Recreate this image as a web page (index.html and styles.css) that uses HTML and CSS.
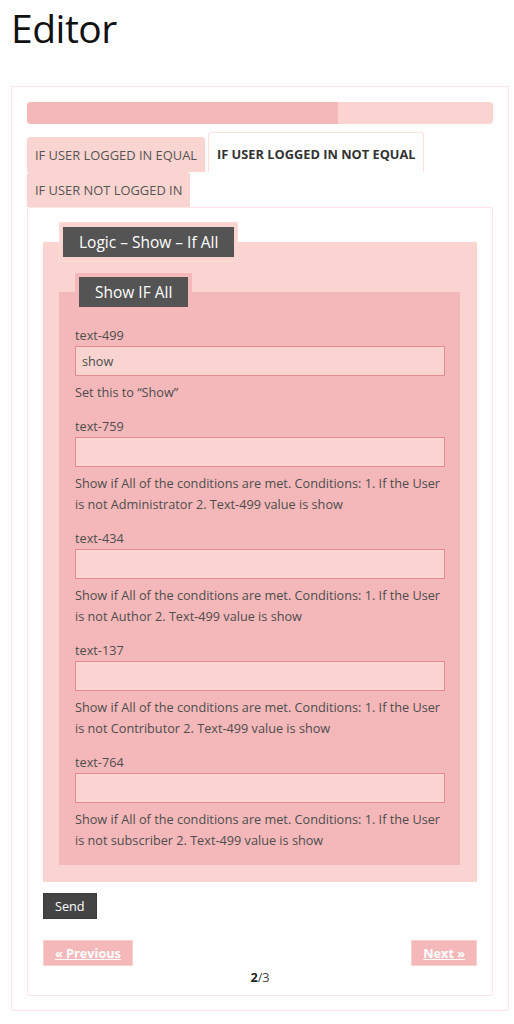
FILE: index.html
```html
<!DOCTYPE html>
<html>
<head>
<meta charset="utf-8">
<link rel="stylesheet" href="styles.css">
</head>
<body>
<h1 class="title">Editor</h1>
<div class="outer">
  <div class="progress"><div class="progress-fill" style="width:66.7%"></div></div>
  <div class="tabs">
    <div class="tab">IF USER LOGGED IN EQUAL</div>
    <div class="tab tab-active">IF USER LOGGED IN NOT EQUAL</div>
    <div class="tab">IF USER NOT LOGGED IN</div>
  </div>
  <div class="panel">
    <fieldset class="fs fs-outer">
      <legend class="lg lg-outer"><span class="lg-text">Logic – Show – If All</span></legend>
      <fieldset class="fs fs-inner">
        <legend class="lg lg-inner"><span class="lg-text">Show IF All</span></legend>
        <div class="field">
          <label class="label">text-499</label>
          <div class="input">show</div>
          <p class="desc">Set this to “Show”</p>
        </div>
        <div class="field">
          <label class="label">text-759</label>
          <div class="input"></div>
          <p class="desc">Show if All of the conditions are met. Conditions: 1. If the User is not Administrator 2. Text-499 value is show</p>
        </div>
        <div class="field">
          <label class="label">text-434</label>
          <div class="input"></div>
          <p class="desc">Show if All of the conditions are met. Conditions: 1. If the User is not Author 2. Text-499 value is show</p>
        </div>
        <div class="field">
          <label class="label">text-137</label>
          <div class="input"></div>
          <p class="desc">Show if All of the conditions are met. Conditions: 1. If the User is not Contributor 2. Text-499 value is show</p>
        </div>
        <div class="field">
          <label class="label">text-764</label>
          <div class="input"></div>
          <p class="desc">Show if All of the conditions are met. Conditions: 1. If the User is not subscriber 2. Text-499 value is show</p>
        </div>
      </fieldset>
    </fieldset>
    <div class="send-row"><span class="send">Send</span></div>
    <div class="nav">
      <span class="navbtn">« Previous</span>
      <span class="navbtn">Next »</span>
    </div>
    <div class="pager"><b>2</b>/3</div>
  </div>
</div>
</body>
</html>
```

FILE: styles.css
```css
html, body {
  margin: 0;
  padding: 0;
  background: #fff;
}
body {
  font-family: "Open Sans", "Liberation Sans", sans-serif;
  color: #4d4d4d;
  padding: 0 5px 0 11px;
}
.title {
  font-family: "Open Sans", sans-serif;
  font-weight: 400;
  font-size: 39px;
  letter-spacing: -0.5px;
  color: #111;
  margin: 0;
  padding: 1px 0 0 0;
  line-height: 54px;
  height: 85px;
}
.outer {
  border: 1px solid #fde6e6;
  padding: 15px 15px 14px 15px;
  width: 466px;
}
.progress {
  height: 22px;
  background: #fad4d0;
  border-radius: 4px;
  overflow: hidden;
}
.progress-fill {
  height: 100%;
  background: #f5b8ba;
}
.tabs {
  display: flex;
  flex-wrap: wrap;
  align-items: flex-end;
  margin-top: 8px;
}
.tab {
  background: #fad4d0;
  font-size: 12.9px;
  color: #555;
  padding: 0 8px;
  height: 35px;
  line-height: 36px;
  margin-right: 3px;
  border-radius: 3px 3px 0 0;
  white-space: nowrap;
}
.tab-active {
  background: #fff;
  border: 1px solid #fde0de;
  border-bottom: none;
  height: 39px;
  line-height: 42px;
  font-weight: 700;
  font-size: 12.8px;
  color: #333;
  padding: 0 7px 0 8px;
  margin-right: 40px;
}
.panel {
  border: 1px solid #fde3e3;
  border-radius: 3px;
  padding: 14px 15px 8px 15px;
}
.fs {
  margin: 0;
  border: none;
  min-width: 0;
}
.fs-outer {
  background: #fad4d0;
  padding: 11px 17px 17px 16px;
}
.fs-inner {
  background: #f5b8ba;
  padding: 14px 15px 13px 16px;
}
.lg {
  padding: 4px;
  margin-left: 0;
}
.lg-outer {
  background: #fad4d0;
  border: 1px solid #fcdcd8;
  padding: 4px 3px 4px 3px;
}
.lg-inner {
  background: #f5b8ba;
}
.lg-text {
  display: block;
  background: #545454;
  color: #fff;
  font-size: 15.5px;
  height: 30px;
  line-height: 30px;
  padding: 0 16px 0 16px;
}
.field {
  margin-bottom: 12px;
}
.field:last-child {
  margin-bottom: 0;
}
.label {
  display: block;
  font-size: 12.7px;
  line-height: 21px;
  color: #4d4d4d;
}
.input {
  height: 28px;
  background: #fad4d0;
  border: 1px solid #e48c90;
  font-size: 12.7px;
  line-height: 28px;
  padding: 0 6px;
  color: #4d4d4d;
}
.desc {
  margin: 6px 0 0 0;
  font-size: 12.7px;
  line-height: 21.5px;
  color: #4d4d4d;
}
.send-row {
  margin-top: 11px;
  display: flex;
}
.send {
  background: #444;
  border: 1px solid #3a3a3a;
  color: #fff;
  font-size: 12.7px;
  height: 24px;
  line-height: 24px;
  padding: 0 11px;
}
.nav {
  margin-top: 21px;
  display: flex;
  justify-content: space-between;
}
.navbtn {
  background: #f5b8ba;
  border: 1px solid #fbd0d0;
  color: #fff;
  font-weight: 700;
  font-size: 12.7px;
  text-decoration: underline;
  height: 24px;
  line-height: 24px;
  padding: 0 11px;
}
.pager {
  text-align: center;
  font-size: 12.7px;
  line-height: 20px;
  margin-top: 1px;
  color: #444;
}
.pager b {
  color: #222;
}
```
